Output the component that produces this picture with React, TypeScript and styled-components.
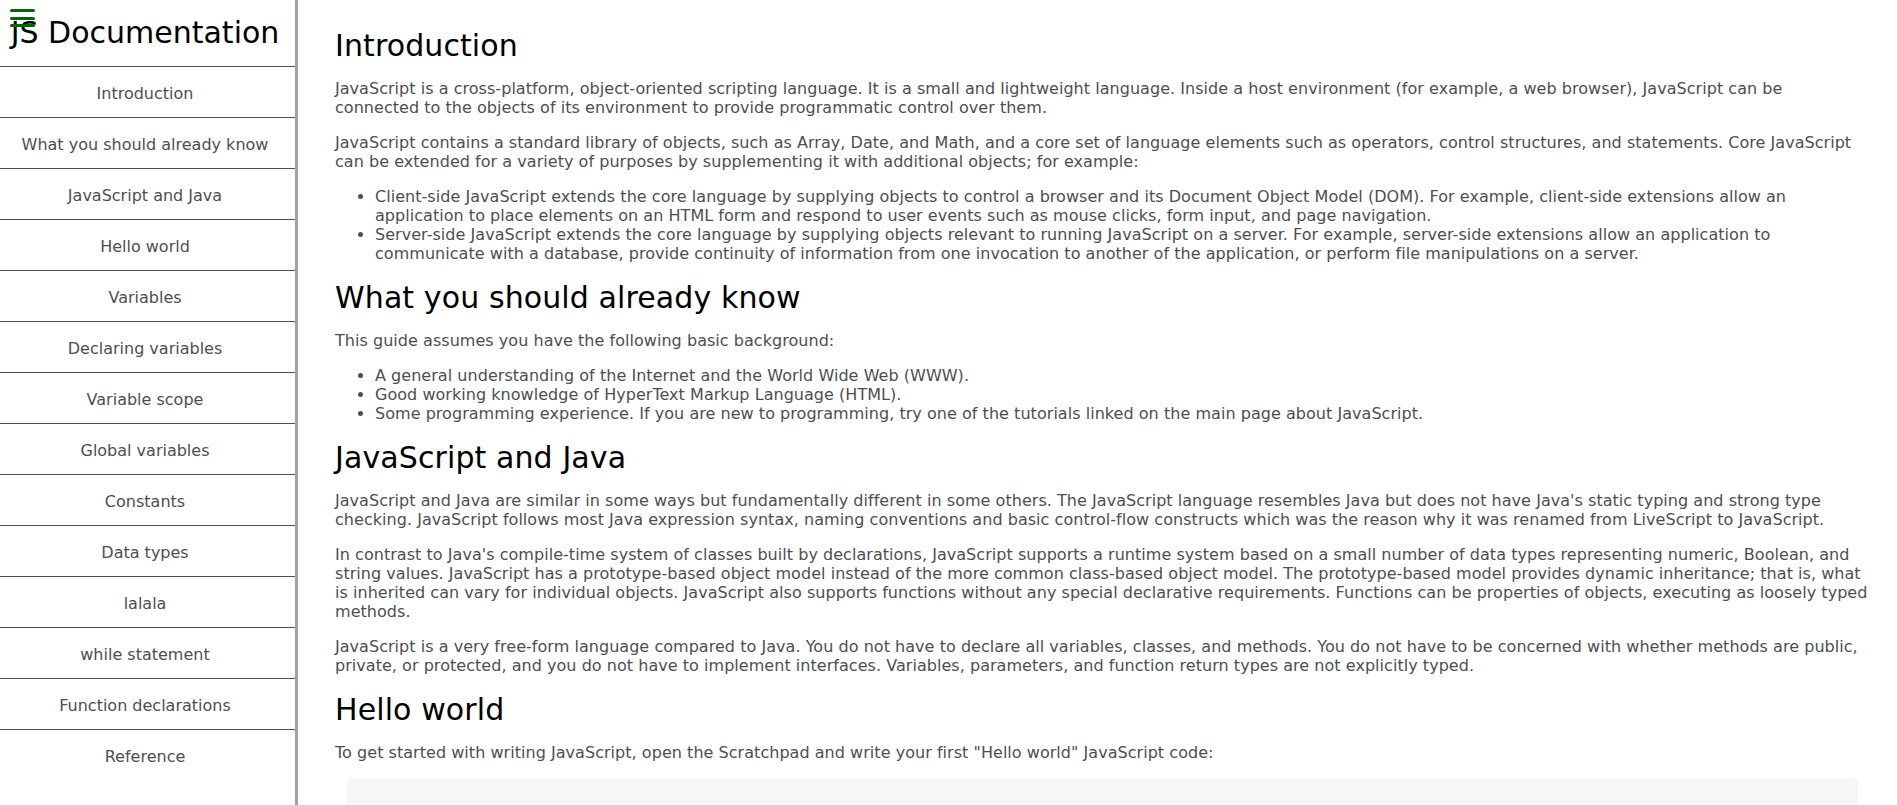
import React from "react";
import styled, { createGlobalStyle } from "styled-components";

const GlobalStyle = createGlobalStyle`
  html, body {
    margin: 0;
    padding: 0;
    height: 100%;
    overflow: hidden;
    background: #ffffff;
  }
  body {
    font-family: "DejaVu Sans", Verdana, sans-serif;
    font-size: 16px;
    color: #4d4e53;
  }
  *, *::before, *::after { box-sizing: border-box; }
`;

const Page = styled.div`
  display: flex;
  height: 100vh;
  overflow: hidden;
`;

const Sidebar = styled.nav`
  position: relative;
  flex: 0 0 298px;
  height: 100%;
  border-right: 3px solid #9ba4a3;
  display: flex;
  flex-direction: column;
`;

const Title = styled.header`
  margin: 0;
  padding: 15px 5px 16px 0;
  font-size: 30px;
  line-height: 35px;
  font-weight: normal;
  color: #000000;
  text-align: center;
  white-space: nowrap;
`;

const Burger = styled.div`
  position: absolute;
  left: 10px;
  top: 9px;
  width: 25px;
  display: flex;
  flex-direction: column;
  gap: 4.5px;
`;

const BurgerBar = styled.span`
  display: block;
  height: 3px;
  border-radius: 2px;
  background: #076307;
`;

const NavList = styled.ul`
  list-style: none;
  margin: 0;
  padding: 0;
`;

const NavItem = styled.li`
  border-top: 1px solid #4d4e53;
`;

const NavLink = styled.a`
  display: block;
  padding: 17px 5px 13px 0;
  line-height: 20px;
  text-align: center;
  color: #4d4e53;
  text-decoration: none;
  white-space: nowrap;
`;

const Main = styled.main`
  flex: 1 1 auto;
  min-width: 0;
  padding: 27px 27px 0 37px;
  line-height: 19px;
  letter-spacing: 0.04px;
`;

const Section = styled.section``;

const Heading = styled.h1`
  margin: 0;
  padding-top: 2px;
  font-size: 30px;
  font-weight: normal;
  line-height: 34px;
  letter-spacing: 0.1px;
  color: #000000;
`;

const Para = styled.p`
  margin: 16px 0;
`;

const List = styled.ul`
  margin: 16px 0;
  padding-left: 40px;
`;

const Item = styled.li``;

const CodeBlock = styled.pre`
  margin: 15px 12px 16px 11px;
  padding: 30px 20px;
  background: #f6f6f6;
  border-radius: 5px;
  font-family: "DejaVu Sans Mono", monospace;
  font-size: 15px;
  line-height: 1.4;
  letter-spacing: 0;
  color: #4d4e53;
  white-space: pre-wrap;
`;

const navItems = [
  "Introduction",
  "What you should already know",
  "JavaScript and Java",
  "Hello world",
  "Variables",
  "Declaring variables",
  "Variable scope",
  "Global variables",
  "Constants",
  "Data types",
  "lalala",
  "while statement",
  "Function declarations",
  "Reference",
];

export default function App() {
  return (
    <>
      <GlobalStyle />
      <Page>
        <Sidebar id="navbar">
          <Burger aria-hidden="true">
            <BurgerBar />
            <BurgerBar />
            <BurgerBar />
          </Burger>
          <Title>JS Documentation</Title>
          <NavList>
            {navItems.map((t) => (
              <NavItem key={t}>
                <NavLink href={"#" + t.replace(/ /g, "_")}>{t}</NavLink>
              </NavItem>
            ))}
          </NavList>
        </Sidebar>
        <Main id="main-doc">
          <Section id="Introduction">
            <Heading>Introduction</Heading>
            <Para>
              JavaScript is a cross-platform, object-oriented scripting language. It is a small and lightweight
              language. Inside a host environment (for example, a web browser), JavaScript can be connected to the
              objects of its environment to provide programmatic control over them.
            </Para>
            <Para>
              JavaScript contains a standard library of objects, such as Array, Date, and Math, and a core set of
              language elements such as operators, control structures, and statements. Core JavaScript can be
              extended for a variety of purposes by supplementing it with additional objects; for example:
            </Para>
            <List>
              <Item>
                Client-side JavaScript extends the core language by supplying objects to control a browser and its
                Document Object Model (DOM). For example, client-side extensions allow an application to place
                elements on an HTML form and respond to user events such as mouse clicks, form input, and page
                navigation.
              </Item>
              <Item>
                Server-side JavaScript extends the core language by supplying objects relevant to running JavaScript
                on a server. For example, server-side extensions allow an application to communicate with a
                database, provide continuity of information from one invocation to another of the application, or
                perform file manipulations on a server.
              </Item>
            </List>
          </Section>
          <Section id="What_you_should_already_know">
            <Heading>What you should already know</Heading>
            <Para>This guide assumes you have the following basic background:</Para>
            <List>
              <Item>A general understanding of the Internet and the World Wide Web (WWW).</Item>
              <Item>Good working knowledge of HyperText Markup Language (HTML).</Item>
              <Item>
                Some programming experience. If you are new to programming, try one of the tutorials linked on the
                main page about JavaScript.
              </Item>
            </List>
          </Section>
          <Section id="JavaScript_and_Java">
            <Heading>JavaScript and Java</Heading>
            <Para>
              JavaScript and Java are similar in some ways but fundamentally different in some others. The
              JavaScript language resembles Java but does not have Java's static typing and strong type checking.
              JavaScript follows most Java expression syntax, naming conventions and basic control-flow constructs
              which was the reason why it was renamed from LiveScript to JavaScript.
            </Para>
            <Para>
              In contrast to Java's compile-time system of classes built by declarations, JavaScript supports a
              runtime system based on a small number of data types representing numeric, Boolean, and string
              values. JavaScript has a prototype-based object model instead of the more common class-based object
              model. The prototype-based model provides dynamic inheritance; that is, what is inherited can vary for
              individual objects. JavaScript also supports functions without any special declarative requirements.
              Functions can be properties of objects, executing as loosely typed methods.
            </Para>
            <Para>
              JavaScript is a very free-form language compared to Java. You do not have to declare all variables,
              classes, and methods. You do not have to be concerned with whether methods are public, private, or
              protected, and you do not have to implement interfaces. Variables, parameters, and function return
              types are not explicitly typed.
            </Para>
          </Section>
          <Section id="Hello_world">
            <Heading>Hello world</Heading>
            <Para>
              To get started with writing JavaScript, open the Scratchpad and write your first "Hello world"
              JavaScript code:
            </Para>
            <CodeBlock>
              {'function greetMe(yourName) { alert("Hello " + yourName); }\ngreetMe("World");'}
            </CodeBlock>
          </Section>
        </Main>
      </Page>
    </>
  );
}
